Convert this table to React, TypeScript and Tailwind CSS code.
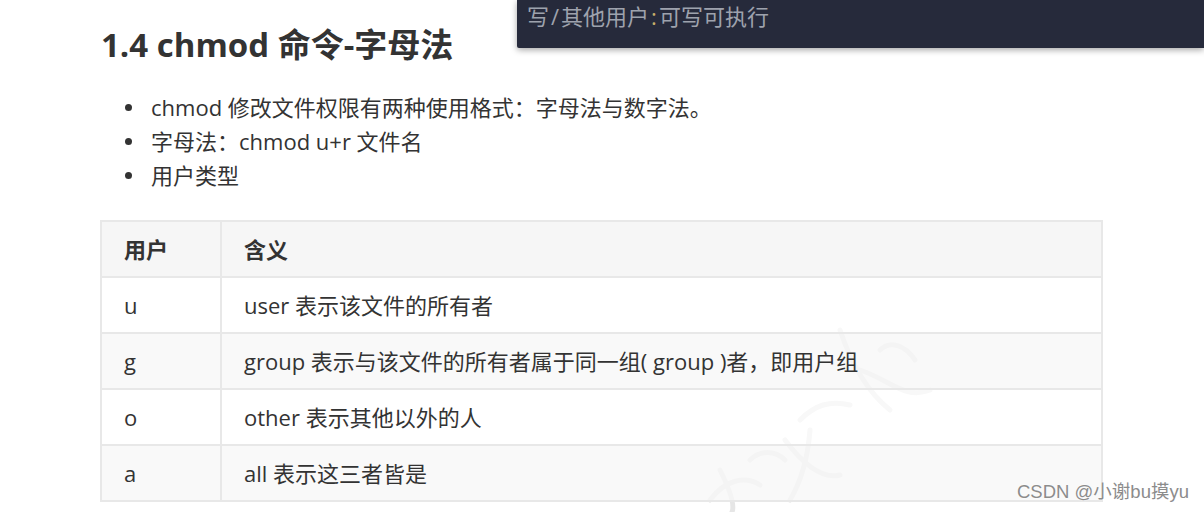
import React from "react";

const font = { fontFamily: '"Open Sans", "Noto Sans CJK SC", sans-serif' };

const bullets = [
  "chmod 修改文件权限有两种使用格式：字母法与数字法。",
  "字母法：chmod u+r 文件名",
  "用户类型",
];

const rows = [
  { who: "u", desc: "user 表示该文件的所有者" },
  { who: "g", desc: "group 表示与该文件的所有者属于同一组( group )者，即用户组" },
  { who: "o", desc: "other 表示其他以外的人" },
  { who: "a", desc: "all 表示这三者皆是" },
];

const App = () => {
  return (
    <div className="relative w-[1204px] h-[512px] overflow-hidden bg-white text-[#333]" style={font}>
      {/* faint calligraphy watermark drawn as brush strokes */}
      <svg className="absolute left-[690px] top-[310px] pointer-events-none" width="260" height="202" viewBox="0 0 260 202">
        <g fill="none" stroke="#e6e6e6" strokeWidth="5" strokeLinecap="round">
          <path d="M150 20 C160 50 175 80 200 100" />
          <path d="M170 60 C200 70 215 90 240 80" />
          <path d="M190 40 C200 30 215 35 225 50" />
          <path d="M110 110 C125 95 140 90 160 95" />
          <path d="M95 130 C110 150 130 170 150 165" />
          <path d="M120 120 C118 145 112 170 100 190" />
          <path d="M60 150 C70 140 85 140 95 150" />
          <path d="M20 190 C35 170 55 165 70 175" />
          <path d="M30 160 C40 180 45 195 42 202" />
        </g>
      </svg>

      <div className="relative pl-[100px] pt-[20px]">
        <h1 className="text-[33px] leading-[50px] font-bold text-[#333] pl-[1px]">1.4 chmod 命令-字母法</h1>

        <ul className="mt-[20px] pl-[25px]">
          {bullets.map((b) => (
            <li key={b} className="flex items-center h-[34px] text-[22px]">
              <span className="w-[7px] h-[7px] rounded-full bg-[#333] mr-[19px]" />
              <span>{b}</span>
            </li>
          ))}
        </ul>

        <table className="mt-[28px] w-[1003px] border-collapse border-2 border-[#e8e8e8] text-[22px]">
          <thead>
            <tr className="h-[56px] bg-[#f6f6f6]">
              <th className="w-[120px] border-2 border-[#e8e8e8] text-left pl-[22px] font-bold">用户</th>
              <th className="border-2 border-[#e8e8e8] text-left pl-[22px] font-bold">含义</th>
            </tr>
          </thead>
          <tbody>
            {rows.map((r, i) => (
              <tr key={r.who} className={i % 2 === 1 ? "h-[56px] bg-[#f7f7f7]/80" : "h-[56px] bg-white/70"}>
                <td className="border-2 border-[#e8e8e8] pl-[22px]">{r.who}</td>
                <td className="border-2 border-[#e8e8e8] pl-[22px]">{r.desc}</td>
              </tr>
            ))}
          </tbody>
        </table>
      </div>

      {/* dark tooltip overlay */}
      <div className="absolute top-0 left-[517px] right-0 h-[48px] bg-[#262a3b] shadow-[0_2px_6px_rgba(0,0,0,0.35)] rounded-bl-[2px]">
        <div className="pl-[10px] pt-[1px] text-[22px] leading-[30px] text-[#9ea2ad]">
          写<span className="px-[2px]">/</span>其他用户<span className="px-[2px] text-[#c7b06a]">:</span>可写可执行
        </div>
      </div>

      {/* CSDN watermark */}
      <div
        className="absolute left-[1017px] top-[480px] text-[18.5px] leading-[24px] text-[#8c8c8c]"
        style={{ fontFamily: '"Liberation Sans", "Noto Sans CJK SC", sans-serif', textShadow: "0 0 2px #fff" }}
      >
        CSDN @小谢bu摸yu
      </div>
    </div>
  );
};

export default App;
